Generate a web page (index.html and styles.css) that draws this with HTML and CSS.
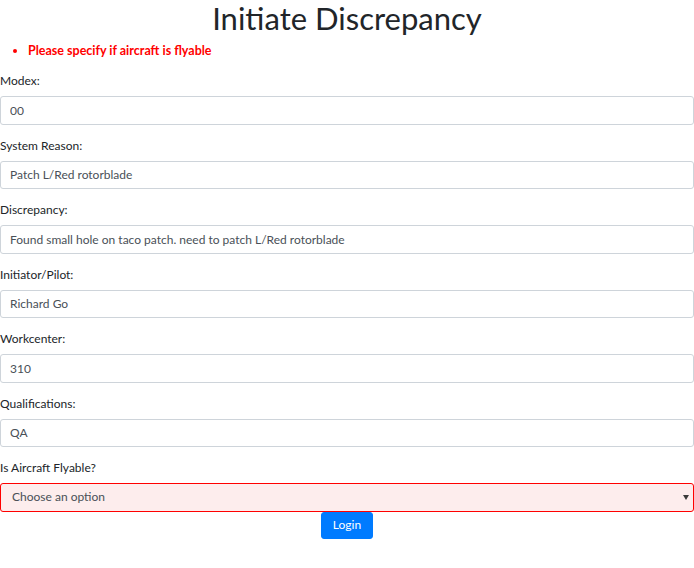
FILE: index.html
```html
<!DOCTYPE html>
<html lang="en">
<head>
<meta charset="utf-8">
<title>Initiate Discrepancy</title>
<link rel="stylesheet" href="styles.css">
</head>
<body>
<h1 class="title">Initiate Discrepancy</h1>
<ul class="errors">
  <li>Please specify if aircraft is flyable</li>
</ul>
<form class="form">
  <div class="form-group">
    <label class="label">Modex:</label>
    <input class="control" type="text" value="00">
  </div>
  <div class="form-group">
    <label class="label">System Reason:</label>
    <input class="control" type="text" value="Patch L/Red rotorblade">
  </div>
  <div class="form-group">
    <label class="label">Discrepancy:</label>
    <input class="control" type="text" value="Found small hole on taco patch. need to patch L/Red rotorblade">
  </div>
  <div class="form-group">
    <label class="label">Initiator/Pilot:</label>
    <input class="control" type="text" value="Richard Go">
  </div>
  <div class="form-group">
    <label class="label">Workcenter:</label>
    <input class="control" type="text" value="310">
  </div>
  <div class="form-group">
    <label class="label">Qualifications:</label>
    <input class="control" type="text" value="QA">
  </div>
  <div class="form-group last">
    <label class="label">Is Aircraft Flyable?</label>
    <div class="select-wrap">
      <select class="control select invalid">
        <option>Choose an option</option>
        <option>Yes</option>
        <option>No</option>
      </select>
      <svg class="arrow" width="6" height="5" viewBox="0 0 6 5"><path d="M0 0H6L3 5Z" fill="#3a3a3a"/></svg>
    </div>
  </div>
  <div class="actions">
    <button class="btn" type="button">Login</button>
  </div>
</form>
</body>
</html>
```
FILE: styles.css
```css
html, body {
  margin: 0;
  padding: 0;
}
body {
  font-family: Lato, "Open Sans", "Noto Sans", sans-serif;
  font-size: 12px;
  line-height: 18px;
  color: #212529;
  background: #fff;
}
.title {
  font-size: 31px;
  font-weight: 400;
  line-height: 36px;
  text-align: center;
  margin: 0 0 6px;
}
.errors {
  margin: 0 0 12px;
  padding-left: 28px;
  color: #ff0000;
  font-weight: 700;
  font-size: 12.5px;
}
.form-group {
  margin-bottom: 12px;
}
.form-group.last {
  margin-bottom: 0;
}
.label {
  display: block;
  margin-bottom: 6px;
}
.control {
  display: block;
  box-sizing: border-box;
  width: 100%;
  height: 28.5px;
  padding: 4px 9px;
  font-family: inherit;
  font-size: 12px;
  line-height: 18px;
  color: #495057;
  background: #fff;
  border: 1px solid #ced4da;
  border-radius: 3px;
  margin: 0;
}
.select-wrap {
  position: relative;
}
.select {
  appearance: none;
  -webkit-appearance: none;
  padding-left: 11px;
}
.select.invalid {
  border-color: #ff0000;
  background: #fdeded;
}
.arrow {
  position: absolute;
  right: 5px;
  top: 12px;
}
.actions {
  display: flex;
  justify-content: center;
}
.btn {
  font-family: inherit;
  font-size: 12px;
  line-height: 18px;
  color: #fff;
  background: #007bff;
  border: 1px solid #007bff;
  border-radius: 3px;
  padding: 3.5px 10.5px;
  margin: 0;
}
```
